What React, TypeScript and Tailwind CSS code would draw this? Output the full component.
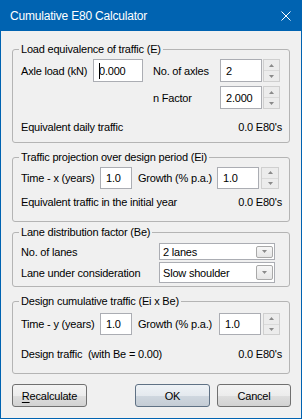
import React from "react";

function Up() {
  return (
    <svg width="5" height="3" viewBox="0 0 5 3">
      <path d="M2.5 0 L5 3 L0 3Z" fill="#8a8a8a" />
    </svg>
  );
}
function Down() {
  return (
    <svg width="5" height="3" viewBox="0 0 5 3">
      <path d="M0 0 L5 0 L2.5 3Z" fill="#8a8a8a" />
    </svg>
  );
}

function Box({ className, children }: { className: string; children?: React.ReactNode }) {
  return (
    <div className={`shrink-0 bg-white border border-[#abadb3] flex items-center pl-[5px] ${className}`}>
      {children}
    </div>
  );
}

function SpinBtns({ className }: { className: string }) {
  return (
    <div className={`shrink-0 flex flex-col border border-[#cfcfcf] bg-[#ececec] ${className}`}>
      <div className="flex-1 flex items-center justify-center border-b border-[#dadada]">
        <Up />
      </div>
      <div className="flex-1 flex items-center justify-center">
        <Down />
      </div>
    </div>
  );
}

function Combo({ className, btnClass, text }: { className: string; btnClass: string; text: string }) {
  return (
    <div className={`shrink-0 w-[116px] bg-white border border-[#abadb3] flex items-center justify-between pl-[3px] pr-px ${className}`}>
      <span>{text}</span>
      <div
        className={`w-[17px] rounded-[2px] border border-[#a9a9a9] bg-[linear-gradient(to_bottom,#f7f7f7,#e6e6e6)] flex items-center justify-center ${btnClass}`}
      >
        <Down />
      </div>
    </div>
  );
}

function Label({ className, children }: { className: string; children: React.ReactNode }) {
  return <span className={`shrink-0 whitespace-nowrap ${className}`}>{children}</span>;
}

const btnBase =
  "h-[23px] rounded-[3px] border flex items-center justify-center";

export default function App() {
  return (
    <div className="w-[302px] h-[419px] bg-[#0063b1] flex flex-col font-['Liberation_Sans',Arial,sans-serif] text-black">
      <div className="h-[31px] shrink-0 flex items-center justify-between pl-[10px] pr-[11px] text-white text-[12px] tracking-[-0.2px]">
        <span>Cumulative E80 Calculator</span>
        <svg width="10" height="10" viewBox="0 0 10 10">
          <path d="M0.5 0.5 L9.5 9.5 M9.5 0.5 L0.5 9.5" stroke="white" strokeWidth="1" />
        </svg>
      </div>
      <div className="flex-1 mx-px mb-px bg-[#f0f0f0] flex flex-col text-[11px] tracking-[-0.2px] leading-[14px] pt-[11px]">
        {/* Group 1 */}
        <fieldset className="mx-[11px] border border-[#b4b4b4] rounded-[3px] pl-2 pr-[7px] pb-[8px]">
          <legend className="-ml-[2px] px-[2px] leading-[14px]">Load equivalence of traffic (E)</legend>
          <div className="mt-[3px] h-[23px] flex items-center">
            <Label className="w-[72px]">Axle load (kN)</Label>
            <Box className="w-[50px] h-[23px]">
              <span className="relative">
                0.000
                <span className="absolute left-0 top-[-1px] bottom-[-1px] w-px bg-black" />
              </span>
            </Box>
            <Label className="ml-[10px] w-[67px]">No. of axles</Label>
            <Box className="w-[42px] h-[23px]">2</Box>
            <SpinBtns className="ml-px w-[17px] h-[23px]" />
          </div>
          <div className="mt-[4px] h-[23px] flex items-center">
            <Label className="ml-[132px] w-[67px]">n Factor</Label>
            <Box className="w-[42px] h-[23px]">2.000</Box>
            <SpinBtns className="ml-px w-[17px] h-[23px]" />
          </div>
          <div className="mt-[11px] flex justify-between">
            <span>Equivalent daily traffic</span>
            <span>0.0 E80's</span>
          </div>
        </fieldset>

        {/* Group 2 */}
        <fieldset className="mt-[7px] mx-[11px] border border-[#b4b4b4] rounded-[3px] pl-2 pr-[7px] pb-[12px]">
          <legend className="-ml-[2px] px-[2px] leading-[14px]">Traffic projection over design period (Ei)</legend>
          <div className="mt-[3px] h-[22px] flex items-center">
            <Label className="w-[79px]">Time - x (years)</Label>
            <Box className="w-[32px] h-[22px]">1.0</Box>
            <Label className="ml-[6px] w-[79px]">Growth (% p.a.)</Label>
            <Box className="w-[42px] h-[22px]">1.0</Box>
            <SpinBtns className="ml-[2px] w-[18px] h-[22px]" />
          </div>
          <div className="mt-[6px] flex justify-between">
            <span>Equivalent traffic in the initial year</span>
            <span>0.0 E80's</span>
          </div>
        </fieldset>

        {/* Group 3 */}
        <fieldset className="mt-[3px] mx-[11px] border border-[#b4b4b4] rounded-[3px] pl-2 pr-[7px] pb-[3px]">
          <legend className="-ml-[2px] px-[2px] leading-[14px]">Lane distribution factor (Be)</legend>
          <div className="mt-[4px] flex items-center">
            <Label className="w-[138px]">No. of lanes</Label>
            <Combo className="h-[17px]" btnClass="h-[12px]" text="2 lanes" />
          </div>
          <div className="mt-[2px] flex items-center">
            <Label className="w-[138px]">Lane under consideration</Label>
            <Combo className="h-[21px]" btnClass="h-[15px]" text="Slow shoulder" />
          </div>
        </fieldset>

        {/* Group 4 */}
        <fieldset className="mt-[7px] mx-[11px] border border-[#b4b4b4] rounded-[3px] pl-2 pr-[7px] pb-[12px]">
          <legend className="-ml-[2px] px-[2px] leading-[14px]">Design cumulative traffic (Ei x Be)</legend>
          <div className="mt-[5px] h-[22px] flex items-center">
            <Label className="w-[79px]">Time - y (years)</Label>
            <Box className="w-[32px] h-[22px]">1.0</Box>
            <Label className="ml-[6px] w-[81px]">Growth (% p.a.)</Label>
            <Box className="w-[42px] h-[22px]">1.0</Box>
            <SpinBtns className="ml-[2px] w-[17px] h-[22px]" />
          </div>
          <div className="mt-[12px] flex justify-between">
            <span className="whitespace-pre">Design traffic  (with Be = 0.00)</span>
            <span>0.0 E80's</span>
          </div>
        </fieldset>

        {/* Buttons */}
        <div className="mt-[10px] ml-[11px] mr-[10px] flex justify-between">
          <button
            className={`${btnBase} w-[75px] border-[#707070] bg-[linear-gradient(to_bottom,#f4f4f4_0%,#ececec_50%,#dedede_51%,#d2d2d2_100%)]`}
          >
            <span>
              <span className="underline underline-offset-2">R</span>ecalculate
            </span>
          </button>
          <div className="flex gap-[7px]">
            <button
              className={`${btnBase} w-[75px] border-[#5f7184] bg-[linear-gradient(to_bottom,#eef2f6_0%,#e4e9ee_50%,#cfd7df_51%,#c4ccd5_100%)]`}
            >
              OK
            </button>
            <button
              className={`${btnBase} w-[74px] border-[#707070] bg-[linear-gradient(to_bottom,#f4f4f4_0%,#ececec_50%,#dedede_51%,#d2d2d2_100%)]`}
            >
              Cancel
            </button>
          </div>
        </div>
      </div>
    </div>
  );
}
